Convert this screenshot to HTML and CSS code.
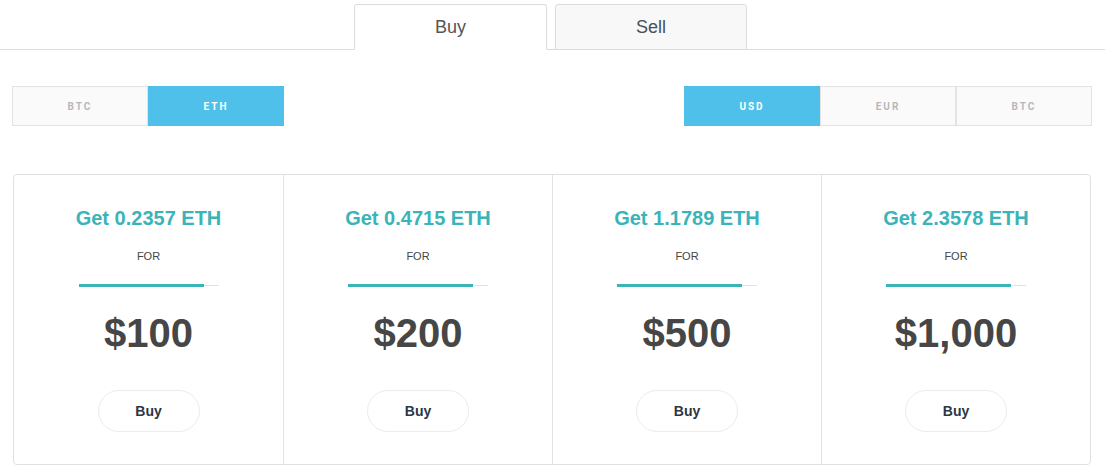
FILE: index.html
```html
<!DOCTYPE html>
<html>
<head>
<meta charset="utf-8">
<link rel="stylesheet" href="styles.css">
</head>
<body>
<div class="tabs">
  <div class="tab active">Buy</div>
  <div class="tab">Sell</div>
</div>
<div class="toggles">
  <div class="group">
    <div class="opt">BTC</div>
    <div class="opt on">ETH</div>
  </div>
  <div class="group">
    <div class="opt on">USD</div>
    <div class="opt">EUR</div>
    <div class="opt">BTC</div>
  </div>
</div>
<div class="cards">
  <div class="card">
    <div class="get">Get 0.2357 ETH</div>
    <div class="for">FOR</div>
    <div class="bar"></div>
    <div class="price">$100</div>
    <button class="buy">Buy</button>
  </div>
  <div class="card">
    <div class="get">Get 0.4715 ETH</div>
    <div class="for">FOR</div>
    <div class="bar"></div>
    <div class="price">$200</div>
    <button class="buy">Buy</button>
  </div>
  <div class="card">
    <div class="get">Get 1.1789 ETH</div>
    <div class="for">FOR</div>
    <div class="bar"></div>
    <div class="price">$500</div>
    <button class="buy">Buy</button>
  </div>
  <div class="card">
    <div class="get">Get 2.3578 ETH</div>
    <div class="for">FOR</div>
    <div class="bar"></div>
    <div class="price">$1,000</div>
    <button class="buy">Buy</button>
  </div>
</div>
</body>
</html>
```
FILE: styles.css
```css
* { box-sizing: border-box; }
body {
  margin: 0;
  background: #fff;
  font-family: "Liberation Sans", Arial, sans-serif;
}
.tabs {
  display: flex;
  gap: 8px;
  padding: 4px 0 0 354px;
  border-bottom: 1px solid #dcdcdc;
}
.tab {
  width: 192px;
  height: 46px;
  margin-bottom: -1px;
  border: 1px solid #dcdcdc;
  border-radius: 3px 3px 0 0;
  background: #f8f8f8;
  color: #47505a;
  font-size: 18px;
  display: flex;
  align-items: center;
  justify-content: center;
  padding-top: 1px;
}
.tab.active {
  width: 193px;
  background: #fff;
  border-bottom-color: #fff;
  color: #555;
}
.toggles {
  display: flex;
  justify-content: space-between;
  padding: 0 13px 0 12px;
  margin-top: 36px;
}
.group { display: flex; }
.opt {
  width: 136px;
  height: 40px;
  border: 1px solid #e3e3e3;
  background: #fafafa;
  color: #b8b8b8;
  font-family: Roboto, "Liberation Sans", sans-serif;
  font-weight: 700;
  font-size: 10px;
  letter-spacing: 2px;
  display: flex;
  align-items: center;
  justify-content: center;
}
.opt.on {
  background: #4ec0e9;
  border-color: #4ec0e9;
  color: #fff;
}
.cards {
  display: grid;
  grid-template-columns: repeat(4, 1fr);
  margin: 48px 14px 0 13px;
  border: 1px solid #e1e1e1;
  border-radius: 4px;
  height: 291px;
}
.card {
  display: flex;
  flex-direction: column;
  align-items: center;
  padding-top: 31px;
  border-left: 1px solid #e3e3e3;
}
.card:first-child { border-left: none; }
.get {
  color: #3ab4b9;
  font-weight: 700;
  font-size: 20px;
  line-height: 24px;
}
.for {
  margin-top: 20px;
  font-size: 11px;
  line-height: 13px;
  color: #444;
}
.bar {
  margin-top: 21px;
  width: 140px;
  height: 3px;
  background:
    linear-gradient(#3ab4b9, #3ab4b9) left center / 125px 3px no-repeat,
    linear-gradient(#e2e2e2, #e2e2e2) center / 100% 1px no-repeat;
}
.price {
  margin-top: 23px;
  font-size: 40px;
  line-height: 46px;
  font-weight: 700;
  color: #464646;
}
.buy {
  margin-top: 34px;
  width: 102px;
  height: 42px;
  border: 1px solid #ececec;
  border-radius: 21px;
  background: #fff;
  font-family: "Liberation Sans", Arial, sans-serif;
  font-weight: 700;
  font-size: 14px;
  color: #2c3645;
  padding: 0;
}
```
